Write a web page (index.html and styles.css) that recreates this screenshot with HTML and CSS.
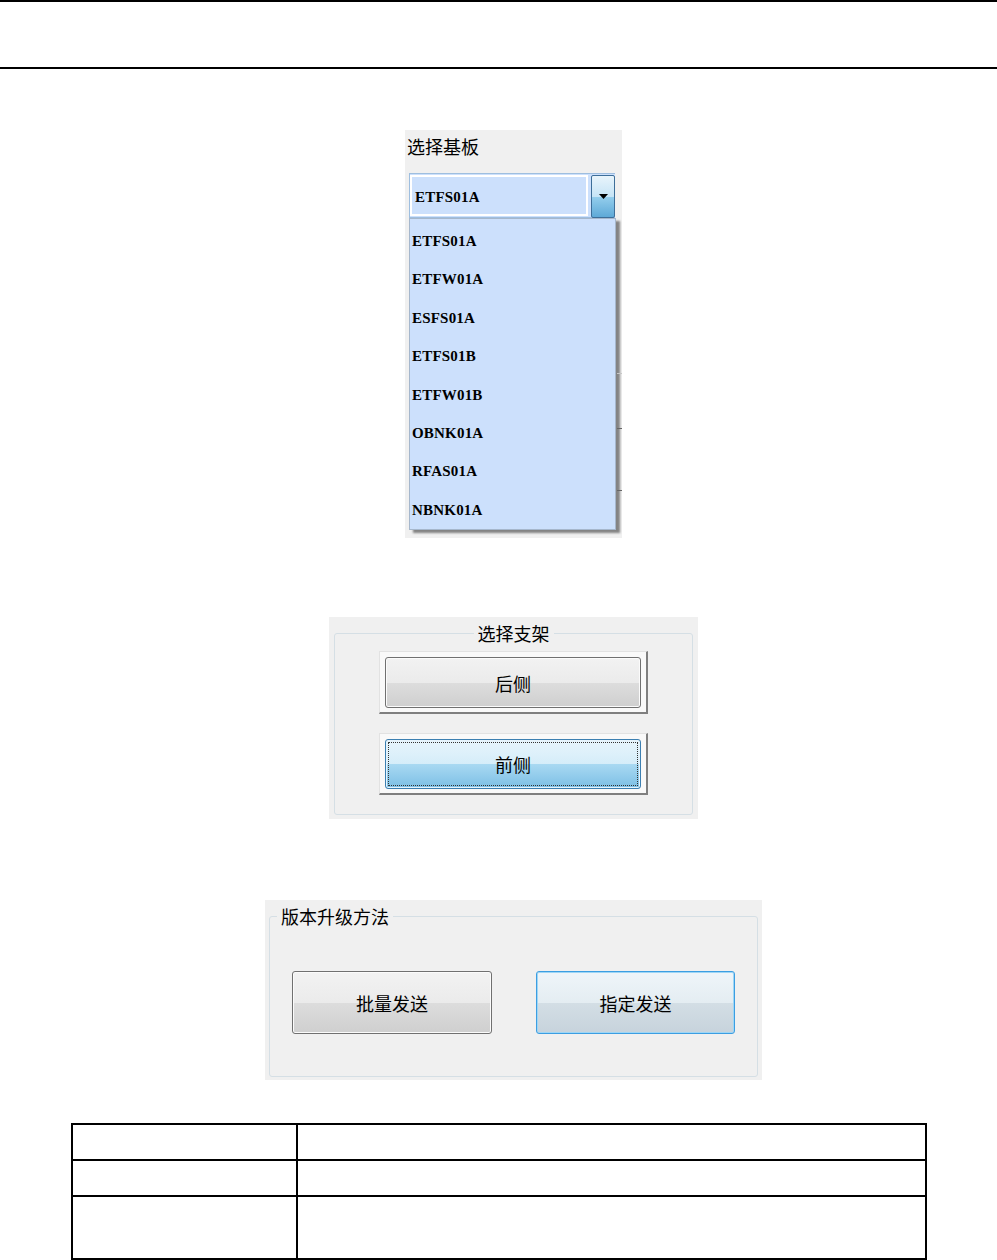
FILE: index.html
```html
<!DOCTYPE html>
<html lang="zh-CN">
<head>
    <meta charset="UTF-8">
    <meta name="viewport" content="width=device-width, initial-scale=1.0">
    <title>单板选择</title>
    <link rel="stylesheet" href="styles.css">
</head>
<body>
    <div class="header"></div>

    <div class="figures">
        <div class="board-panel">
            <div class="board-label">选择基板</div>
            <div class="combo">
                <div class="combo-field">ETFS01A</div>
                <div class="combo-btn">
                    <svg width="9" height="5" viewBox="0 0 9 5"><path d="M0 0H9L4.5 5Z" fill="#000"/></svg>
                </div>
            </div>
            <ul class="combo-list">
                <li>ETFS01A</li>
                <li>ETFW01A</li>
                <li>ESFS01A</li>
                <li>ETFS01B</li>
                <li>ETFW01B</li>
                <li>OBNK01A</li>
                <li>RFAS01A</li>
                <li>NBNK01A</li>
            </ul>
            <span class="stub stub-light"></span>
            <span class="stub stub-dark-1"></span>
            <span class="stub stub-dark-2"></span>
        </div>

        <div class="rack-panel">
            <fieldset class="group">
                <legend class="legend-center">选择支架</legend>
                <div class="frame">
                    <button class="btn">后侧</button>
                </div>
                <div class="frame frame-low">
                    <button class="btn btn-pressed">前侧</button>
                </div>
            </fieldset>
        </div>

        <div class="upgrade-panel">
            <fieldset class="group">
                <legend class="legend-left">版本升级方法</legend>
                <div class="btn-row">
                    <button class="btn btn-lg">批量发送</button>
                    <button class="btn btn-lg btn-hover">指定发送</button>
                </div>
            </fieldset>
        </div>
    </div>

    <table class="spec">
        <tr class="row-a"><td class="col-key"></td><td></td></tr>
        <tr class="row-a"><td class="col-key"></td><td></td></tr>
        <tr class="row-b"><td class="col-key"></td><td></td></tr>
    </table>
</body>
</html>
```

FILE: styles.css
```css
body {
    margin: 0;
    background: #fff;
    font-family: "Noto Sans CJK SC", sans-serif;
    color: #000;
}
.header {
    box-sizing: border-box;
    height: 69px;
    border-top: 2px solid #000;
    border-bottom: 2px solid #000;
}
.figures {
    display: flex;
    flex-direction: column;
    align-items: center;
    padding-left: 30px;
}

/* board combo box */
.board-panel {
    position: relative;
    width: 217px;
    margin-top: 61px;
    padding: 4px 0 8px 2px;
    box-sizing: border-box;
    height: 408px;
    background: #f0f0f0;
}
.board-label {
    font-size: 18px;
    line-height: 24px;
    margin-bottom: 15px;
}
.combo {
    display: flex;
    box-sizing: border-box;
    width: 206px;
    height: 45px;
    margin-left: 2px;
    background: #cce0fc;
    border: 1px solid #9ebedf;
    border-right: 0;
}
.combo-field {
    flex: 1;
    margin: 1px 3px 1px 0;
    border: 2px solid #fff;
    padding: 3px 0 0 3px;
    display: flex;
    align-items: center;
    font-family: "Liberation Serif", serif;
    font-weight: bold;
    font-size: 15px;
    letter-spacing: 0.2px;
}
.combo-btn {
    width: 24px;
    box-sizing: border-box;
    margin: 1px 0 -1px;
    border: 1px solid #3d6e99;
    border-radius: 2px;
    background: linear-gradient(#e8f4fb, #c6e4f6 50%, #93cdec 52%, #5ea9d7);
    display: flex;
    align-items: center;
    justify-content: center;
}
.combo-list {
    list-style: none;
    margin: 0 0 0 2px;
    padding: 2px 0 0 2px;
    box-sizing: border-box;
    width: 207px;
    height: 312px;
    background: #cce0fc;
    border: 1px solid #a6b7cc;
    box-shadow: 4px 3px 2px rgba(0, 0, 0, 0.45);
}
.combo-list li {
    height: 38.4px;
    line-height: 40px;
    font-family: "Liberation Serif", serif;
    font-weight: bold;
    font-size: 15px;
    letter-spacing: 0.2px;
}
.stub {
    position: absolute;
    left: 212px;
    width: 5px;
    height: 1px;
}
.stub-light {
    top: 243px;
    background: #c6c6c6;
}
.stub-dark-1 {
    top: 298px;
    background: #666;
}
.stub-dark-2 {
    top: 360px;
    background: #666;
}

/* group boxes */
.group {
    margin: 0;
    min-width: 0;
    border: 1px solid #d5dfe5;
    border-radius: 3px;
}
.group legend {
    font-size: 18px;
    line-height: 24px;
    padding: 0 4px;
}
.legend-center {
    margin: 0 auto;
}
.legend-left {
    margin-left: 7px;
}

.rack-panel {
    width: 369px;
    height: 202px;
    box-sizing: border-box;
    margin-top: 79px;
    padding: 4px 5px 4px;
    background: #f0f0f0;
}
.rack-panel .group {
    height: 194px;
    box-sizing: border-box;
    padding: 6px 0 19px;
}
.frame {
    width: 269px;
    height: 63px;
    box-sizing: border-box;
    margin: 0 auto;
    padding: 5px 5px 4px 5px;
    background: #f9f9f9;
    border: 1px solid #e2e2e2;
    border-right: 2px solid #7f7f7f;
    border-bottom: 2px solid #7f7f7f;
    display: flex;
}
.frame-low {
    height: 62px;
    margin-top: 19px;
}

.btn {
    flex: 1;
    margin: 0;
    padding: 0;
    border: 1px solid #707070;
    border-radius: 3px;
    box-shadow: inset 0 0 0 1px #fbfbfb;
    background: linear-gradient(#f2f2f2, #ebebeb 50%, #dddddd 50%, #cfcfcf);
    font-family: "Noto Sans CJK SC", sans-serif;
    font-size: 18px;
    color: #000;
}
.btn-pressed {
    border-color: #3c7fb1;
    box-shadow: inset 0 0 0 1px #e6f3fb;
    background: linear-gradient(#e8f5fc, #d5edf9 50%, #a9d9f2 50%, #7cbfe5);
    outline: 1px dotted #333;
    outline-offset: -4px;
}

.upgrade-panel {
    width: 497px;
    height: 180px;
    box-sizing: border-box;
    margin-top: 81px;
    padding: 4px 4px 3px;
    background: #f0f0f0;
}
.upgrade-panel .group {
    height: 173px;
    box-sizing: border-box;
    padding: 43px 0 42px;
}
.btn-row {
    display: flex;
    justify-content: space-between;
    padding: 0 22px;
}
.btn-lg {
    flex: none;
    width: 200px;
    height: 63px;
    font-size: 18px;
}
.btn-hover {
    width: 199px;
    border-color: #3c9ee2;
    box-shadow: inset 0 0 0 1px #9fd6f5;
    background: linear-gradient(#eff5f9, #e4edf2 50%, #d3dee5 50%, #c7d3dc);
}

/* table */
.spec {
    width: 856px;
    margin: 43px auto 0;
    border-collapse: collapse;
}
.spec td {
    border: 2px solid #000;
    padding: 0;
}
.spec .col-key {
    width: 223px;
    border-right: 1px solid #000;
}
.row-a {
    height: 36px;
}
.row-b {
    height: 63px;
}
```
